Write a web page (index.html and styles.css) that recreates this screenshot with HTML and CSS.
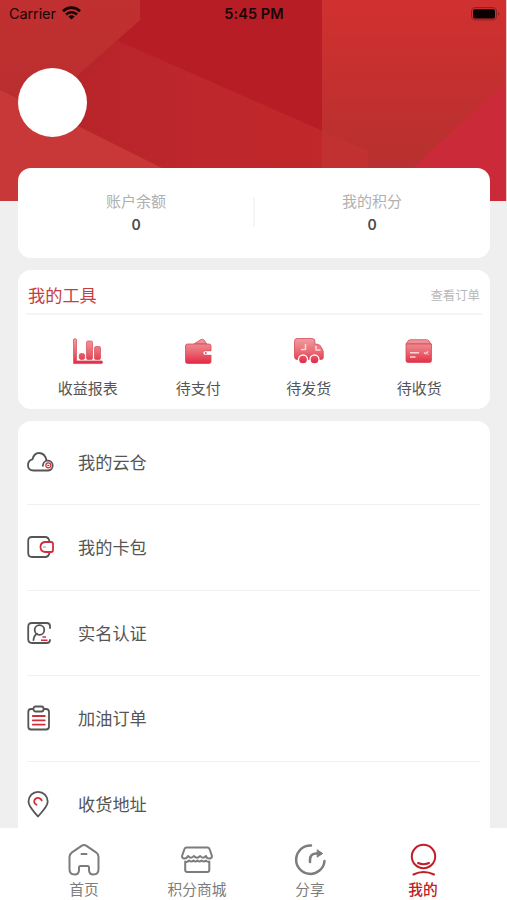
FILE: index.html
```html
<!DOCTYPE html>
<html lang="zh-CN">
<head>
<meta charset="utf-8">
<meta name="viewport" content="width=device-width, initial-scale=1">
<title>我的</title>
<link rel="stylesheet" href="styles.css">
</head>
<body>
<div class="app">
  <main class="content">
    <header class="hero">
      <svg class="hero-art" viewBox="0 0 507 201" preserveAspectRatio="none" aria-hidden="true">
        <defs>
          <linearGradient id="right" x1="0" y1="0" x2="0" y2="1"><stop offset="0" stop-color="#d13030"/><stop offset=".8" stop-color="#b8302f"/></linearGradient>
          <linearGradient id="mid" x1="0" y1="0" x2="1" y2="0"><stop offset=".15" stop-color="#b52328"/><stop offset=".6" stop-color="#bd272d"/><stop offset="1" stop-color="#c1272b"/></linearGradient>
          <linearGradient id="left" x1="0" y1="0" x2="0" y2="1"><stop offset="0" stop-color="#c13030"/><stop offset="1" stop-color="#b92e2f"/></linearGradient>
        </defs>
        <path fill="#b71d25" d="M0 0h323v201H0z"/>
        <path fill="url(#mid)" d="M118 41 323 131v70H0V80z"/>
        <path fill="url(#left)" d="M0 0h140v20L80 73 50 112 0 90z"/>
        <path fill="#c83838" d="M0 90 80 127 162 168v33H0z"/>
        <path fill="url(#right)" d="M322 0h185v201H322z"/>
        <path fill="#c23131" d="M322 131l46 20v17h-46z"/>
        <path fill="#cb2b38" d="M506 81v120h-93v-33z"/>
        <path fill="#f3c6c8" d="M506 0h1v201h-1z"/>
      </svg>
      <div class="status">
        <div class="carrier"><span>Carrier</span>
          <svg width="19" height="14" viewBox="0 0 19 14" fill="none" stroke="#180507" stroke-width="2.7"><path d="M1 5.2C5.800.5 13.200.5 18 5.200M4 8.500c3.200-3 7.800-3 11 0"/><path d="M9.500 13.500 6.300 10.400c1.800-1.600 4.600-1.600 6.400 0z" fill="#180507" stroke="none"/></svg>
        </div>
        <time>5:45 PM</time>
        <svg class="battery" width="30" height="14" viewBox="0 0 30 14"><rect x=".5" y=".6" width="25" height="12.300" rx="3.500" fill="none" stroke="#8b2020"/><rect x="2" y="2.200" width="22" height="9.200" rx="2" fill="#090102"/><path d="M27 5c2 .5 2 3 0 3.600z" fill="#8b2020"/></svg>
      </div>
      <div class="avatar"></div>
    </header>

    <section class="card balance">
      <div class="stat"><span>账户余额</span><strong>0</strong></div>
      <div class="stat"><span>我的积分</span><strong>0</strong></div>
    </section>

    <section class="card tools">
      <div class="tools-head"><h2>我的工具</h2><a>查看订单</a></div>
      <div class="tool-grid">
        <div class="tool">
          <svg width="32" height="28" viewBox="0 0 32 28"><defs><linearGradient id="rose" gradientUnits="userSpaceOnUse" x1="0" y1="0" x2="0" y2="28"><stop offset="0" stop-color="#f0a5a6"/><stop offset=".55" stop-color="#ea6672"/><stop offset="1" stop-color="#e3203f"/></linearGradient></defs><g fill="url(#rose)" stroke="#d64b57" stroke-width=".7"><path d="M1.500 2.500q1.500-2 3 0v21.400h25.500q1.500 1.500 0 2.700H1.500z"/><rect x="7.200" y="16.500" width="5.500" height="6" rx="2"/><rect x="14.500" y="4" width="6" height="18.500" rx="1.500"/><rect x="22.500" y="9.500" width="6" height="13" rx="1.500"/></g></svg>
          <span>收益报表</span>
        </div>
        <div class="tool">
          <svg width="32" height="28" viewBox="0 0 32 28"><g fill="url(#rose)" stroke="#d64b57" stroke-width=".8"><path d="m12 7 7-4.500q3-1.300 5.500 4.500z"/><path d="M5.500 7H27q2 0 2 2v5h-6q-2 0-2 2t2 2h6v6.500q0 2-2 2H5.500q-2 0-2-2V9q0-2 2-2z"/></g><path d="M29.500 14.500H23q-1.500 0-1.500 1.500t1.500 1.500h6.500z" fill="#fff"/><circle cx="23.800" cy="16" r="1" fill="#e15260"/></svg>
          <span>待支付</span>
        </div>
        <div class="tool">
          <svg width="32" height="28" viewBox="0 0 32 28"><g fill="url(#rose)" stroke="#d64b57" stroke-width=".8"><path d="M4 1.500h15q3 0 3 3v2.700h2q3 0 4.500 3.300l1.800 4v6q0 2-2 2H4q-2.500 0-2.500-3V4.500q0-3 2.500-3z"/><circle cx="10" cy="22.500" r="4.500" stroke="#fff" stroke-width="1.300"/><circle cx="21.500" cy="22.500" r="4.500" stroke="#fff" stroke-width="1.300"/></g><path d="M12.500 7v5.500H8M23 9v4h4.500" fill="none" stroke="#ffd5d4" stroke-width="1.600" stroke-linejoin="round"/></svg>
          <span>待发货</span>
        </div>
        <div class="tool">
          <svg width="32" height="28" viewBox="0 0 32 28"><g fill="url(#rose)" stroke="#d64b57" stroke-width=".8"><path d="m3 7 2-3q1-1.300 3-1.300h15q2 0 3 1.300l2 3z"/><path d="M3 7h25.500v16.500q0 2-2 2H5q-2 0-2-2z"/></g><path d="M7 15.700h9M7 20h5.500M21 15.500l1.500 1.200 2.500-2.200M24.500 17.200h.8" fill="none" stroke="#ffd5d4" stroke-width="1.400"/></svg>
          <span>待收货</span>
        </div>
      </div>
    </section>

    <section class="card menu">
      <div class="row"><svg width="28" height="28" viewBox="0 0 28 28"><path d="M6.500 22.500C2.500 22.500 1 20 1 17.300c0-3 2-5.500 4.500-6C6.500 7 9 5 12 5c3.500 0 6.500 2.500 7.500 7.500M6.500 22.500h14.700a4.900 4.900 0 1 0-5.300-4.700"/><circle class="accent thin" cx="21.300" cy="17.300" r="2.500"/><path class="accent thin" d="M20.700 17.300h1.200"/></svg><span>我的云仓</span></div>
      <div class="row"><svg width="28" height="28" viewBox="0 0 28 28"><path d="M22.500 8.500C22 5.500 21 4 18 4H5Q1.200 4 1.200 8v12q0 4 3.800 4h13c3 0 4-1.500 4.500-4.500"/><path class="accent" d="M18 9h6q2 0 2 2v6q0 2-2 2h-6q-4.500-.5-4.500-5T18 9z"/><circle cx="17.500" cy="14" r=".2"/></svg><span>我的卡包</span></div>
      <div class="row"><svg width="28" height="28" viewBox="0 0 28 28"><path d="M23 9V7q0-3-3.500-3H5Q1.200 4 1.200 8v12q0 4 3.800 4h14.500q3.500 0 3.500-3"/><circle cx="12.500" cy="11" r="4.800"/><path d="M6.500 21q.3-4.500 3.500-6.300"/><path class="accent flat" d="M15.500 18h3.500M14 21.300h6.500"/></svg><span>实名认证</span></div>
      <div class="row"><svg width="28" height="28" viewBox="0 0 28 28"><path d="M6 5H4Q1.300 5 1.300 8v14.500q0 3 2.700 3h15q3 0 3-3V8q0-3-3-3h-2"/><rect x="6.500" y="2.500" width="10" height="5" rx="2"/><path class="accent" d="M5.800 12h12M5.800 16.300h12M5.800 20.600h12"/></svg><span>加油订单</span></div>
      <div class="row"><svg width="28" height="28" viewBox="0 0 28 28"><path d="M11 26.500C6 20.500 1.500 16.500 1.500 11.500a9.600 9.600 0 0 1 19.200 0C20.700 16.500 16 20.500 11 26.500z"/><path class="accent" d="M9.500 14.700C6.800 13.700 6.500 10.500 8.500 8.800s5.500-.8 6.200 1.700"/></svg><span>收货地址</span></div>
    </section>
  </main>

  <nav class="tabs">
    <div class="tab"><svg width="34" height="34" viewBox="0 0 34 34"><path d="M14.500 2.800q2.500-1.600 5 0l9.500 6.500q2.500 1.800 2.500 4.700v12q0 5.500-5 5.500-4.500 0-4.500-4.500v-2.500q0-1.500-1.500-1.500h-7q-1.500 0-1.500 1.500v2.500q0 4.500-4.500 4.500-5 0-5-5.500V14q0-3 2.500-4.700zM14.500 11h5"/></svg><span>首页</span></div>
    <div class="tab"><svg width="34" height="34" viewBox="0 0 34 34"><path d="M6.500 4.500h21q1.500 0 2 1.500l2.300 6.500q.5 2.500-1.800 3-3 .5-4-2.500-3 3.500-5.800 0-3.200 3.500-6.400 0-2.800 3.500-5.800 0-1.500 3-4 2.500-2.500-.5-1.800-3L4.500 6q.5-1.500 2-1.500zM5.200 18.500q2 1.200 3.800-1 2.500 2 4.500 0 2 2 4 0 2 2 4 0 2.500 2 4.500 0 1.500 2 3.300 1V27q0 2-2 2H7.200q-2 0-2-2z"/></svg><span>积分商城</span></div>
    <div class="tab"><svg width="34" height="34" viewBox="0 0 34 34"><path class="bold" d="M18 2.500A14.200 14.200 0 1 0 31.500 18M17 19v-2q0-6.500 6.500-6.500H28"/><path d="m24.500 7 5 3.500-5 3.500z" fill="currentColor" stroke-width="1"/></svg><span>分享</span></div>
    <div class="tab active"><svg width="34" height="34" viewBox="0 0 34 34"><circle cx="17.500" cy="13.500" r="11.700"/><path d="M12 20q5.500 2.500 11 0M7.500 31.500q10-5 20.500 0"/></svg><span>我的</span></div>
  </nav>
</div>
</body>
</html>
```
FILE: styles.css
```css
* { box-sizing: border-box; }

body {
  margin: 0;
  background: #efefef;
  color: #555;
  font-family: "Noto Sans CJK SC", sans-serif;
}

.app { height: 900px; display: flex; flex-direction: column; overflow: hidden; }
.content { flex: 1; min-height: 0; overflow: hidden; }

.hero { position: relative; height: 201px; }
.hero-art { position: absolute; inset: 0; width: 100%; height: 100%; z-index: -1; }

.status {
  height: 28px;
  padding: 0 6px 0 9px;
  display: grid;
  grid-template-columns: 1fr auto 1fr;
  align-items: center;
  font: 14.5px/28px Inter, sans-serif;
  color: #180507;
}
.carrier { display: flex; align-items: center; gap: 6px; letter-spacing: -.1px; }
.carrier svg { margin-top: -3px; }
.status time { font-weight: 600; font-size: 14.5px; letter-spacing: .1px; margin-right: 2px; }
.battery { justify-self: end; margin-top: -1px; }

.avatar { width: 69px; height: 69px; margin: 40px 0 0 18px; border-radius: 50%; background: #fff; }

.card { margin: 0 17px 12px 18px; background: #fff; border-radius: 13px; }

.balance {
  position: relative;
  height: 90px;
  margin-top: -33px;
  display: grid;
  grid-template-columns: 1fr 1fr;
  align-items: center;
}
.stat { display: flex; flex-direction: column; align-items: center; font-size: 15px; line-height: 24px; color: #b0b0b0; }
.stat strong { font: 600 14px/24px Inter, sans-serif; color: #4a4a4a; }
.stat + .stat { position: relative; }
.stat + .stat::before { content: ""; position: absolute; left: -1px; top: 8px; width: 2px; height: 30px; background: #f6f6f6; }

.tools { height: 139px; padding: 0 8px; }
.tools-head {
  height: 45px;
  padding: 6px 2px 0;
  display: flex;
  align-items: center;
  justify-content: space-between;
  border-bottom: 2px solid #f5f5f5;
}
.tools-head h2 { margin: 0; font-size: 17.2px; font-weight: 400; color: #c73c40; }
.tools-head a { font-size: 12.4px; color: #b9b9b9; }
.tool-grid { display: grid; grid-template-columns: repeat(4, 110.5px); padding: 22px 0 0 6.5px; }
.tool { display: flex; flex-direction: column; align-items: center; font-size: 15px; line-height: 22px; }
.tool svg { margin-bottom: 12px; }

.menu { padding: 0 10px 0 9px; margin-bottom: 0; }
.row { height: 85.5px; display: flex; align-items: center; gap: 23px; border-bottom: 1px solid #f1f1f1; font-size: 17.2px; line-height: 26px; }
.row:first-child { height: 84px; padding-bottom: 2px; }
.row svg { fill: none; stroke: #555; stroke-width: 1.8; stroke-linecap: round; stroke-linejoin: round; }
.row .accent { stroke: #d22d3b; }
.row .thin { stroke-width: 1.2; }
.row .flat { stroke-linecap: butt; stroke-width: 1.6; }

.tabs { height: 72px; padding: 0 27.5px; display: grid; grid-template-columns: repeat(4, 113px); background: #fff; }
.tab { display: flex; flex-direction: column; align-items: center; padding-top: 15px; font-size: 14.7px; line-height: 22px; color: #7c7c7c; }
.tab svg { margin-bottom: 1px; fill: none; stroke: currentColor; stroke-width: 2; stroke-linecap: round; stroke-linejoin: round; }
.tab .bold { stroke-width: 2.5; }
.tab.active { color: #bd2028; }
.active span { font-weight: 500; }
```
